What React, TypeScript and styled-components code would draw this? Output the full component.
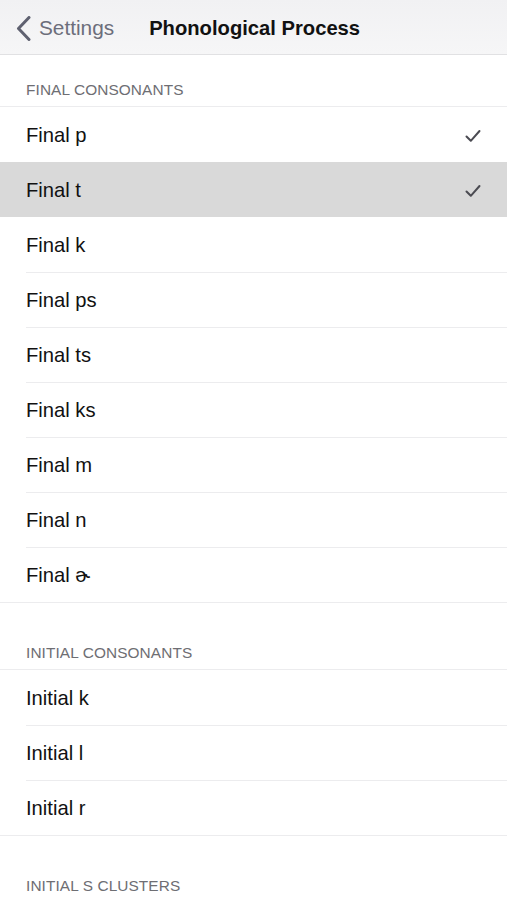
import styled, { createGlobalStyle } from "styled-components";

const GlobalStyle = createGlobalStyle`
  html, body {
    margin: 0;
    padding: 0;
    background: #fff;
  }
  body {
    font-family: "Liberation Sans", "Noto Sans", Arial, sans-serif;
    -webkit-font-smoothing: antialiased;
  }
`;

const Page = styled.div`
  width: 507px;
  min-height: 900px;
  background: #fff;
  display: flex;
  flex-direction: column;
`;

const NavBar = styled.header`
  height: 54px;
  display: flex;
  align-items: center;
  background: linear-gradient(#f1f1f3, #f6f6f7);
  border-bottom: 1px solid #e1e1e3;
  padding-left: 16px;
  gap: 35px;
`;

const BackButton = styled.button`
  display: flex;
  align-items: center;
  gap: 8px;
  border: 0;
  background: none;
  padding: 0;
  margin-top: 2px;
  color: #6c6e7b;
  font-family: inherit;
  font-size: 20.8px;
  cursor: pointer;
`;

const Title = styled.h1`
  margin: 0;
  margin-top: 2px;
  font-size: 20.2px;
  font-weight: 700;
  color: #111;
`;

const SectionHeader = styled.div<{ $first?: boolean }>`
  height: ${(p) => (p.$first ? "52px" : "67px")};
  display: flex;
  align-items: flex-end;
  padding: 0 0 7px 26px;
  box-sizing: border-box;
  font-size: 15.4px;
  color: #6e6e73;
  letter-spacing: 0.1px;
  border-bottom: 1px solid #ececee;
`;

const Group = styled.ul`
  list-style: none;
  margin: 0;
  padding: 0;
  border-bottom: 1px solid #ececee;
`;

const Row = styled.li<{ $active?: boolean }>`
  height: 55px;
  display: flex;
  align-items: center;
  padding: 2px 26px 0 26px;
  background: ${(p) => (p.$active ? "#d9d9d9" : "#fff")};
  position: relative;
  box-sizing: border-box;
  font-size: 20.2px;
  color: #111;

  & + &::before {
    content: "";
    position: absolute;
    top: 0;
    left: 26px;
    right: 0;
    height: 1px;
    background: #ececee;
  }
`;

const Label = styled.span`
  flex: 1;
`;

const Check = () => (
  <svg width="16" height="14" viewBox="0 0 16 14" fill="none">
    <path
      d="M1.5 7.5 L5.8 11.8 L14.5 2"
      stroke="#4b4b52"
      strokeWidth="2"
      strokeLinecap="round"
      strokeLinejoin="round"
    />
  </svg>
);

const Chevron = () => (
  <svg width="15" height="25" viewBox="0 0 15 25" fill="none">
    <path
      d="M13 1.5 L2.5 12.5 L13 23.5"
      stroke="#5f6170"
      strokeWidth="3"
      strokeLinecap="round"
      strokeLinejoin="round"
    />
  </svg>
);

type Item = { label: string; checked?: boolean; active?: boolean };

const finals: Item[] = [
  { label: "Final p", checked: true },
  { label: "Final t", checked: true, active: true },
  { label: "Final k" },
  { label: "Final ps" },
  { label: "Final ts" },
  { label: "Final ks" },
  { label: "Final m" },
  { label: "Final n" },
  { label: "Final ɚ" },
];

const initials: Item[] = [
  { label: "Initial k" },
  { label: "Initial l" },
  { label: "Initial r" },
];

function Section({ title, items, first }: { title: string; items: Item[]; first?: boolean }) {
  return (
    <>
      <SectionHeader $first={first}>{title}</SectionHeader>
      <Group>
        {items.map((item) => (
          <Row key={item.label} $active={item.active}>
            <Label>{item.label}</Label>
            {item.checked && <Check />}
          </Row>
        ))}
      </Group>
    </>
  );
}

export default function App() {
  return (
    <Page>
      <GlobalStyle />
      <NavBar>
        <BackButton>
          <Chevron />
          Settings
        </BackButton>
        <Title>Phonological Process</Title>
      </NavBar>
      <Section title="FINAL CONSONANTS" items={finals} first />
      <Section title="INITIAL CONSONANTS" items={initials} />
      <Section title="INITIAL S CLUSTERS" items={[]} />
    </Page>
  );
}
